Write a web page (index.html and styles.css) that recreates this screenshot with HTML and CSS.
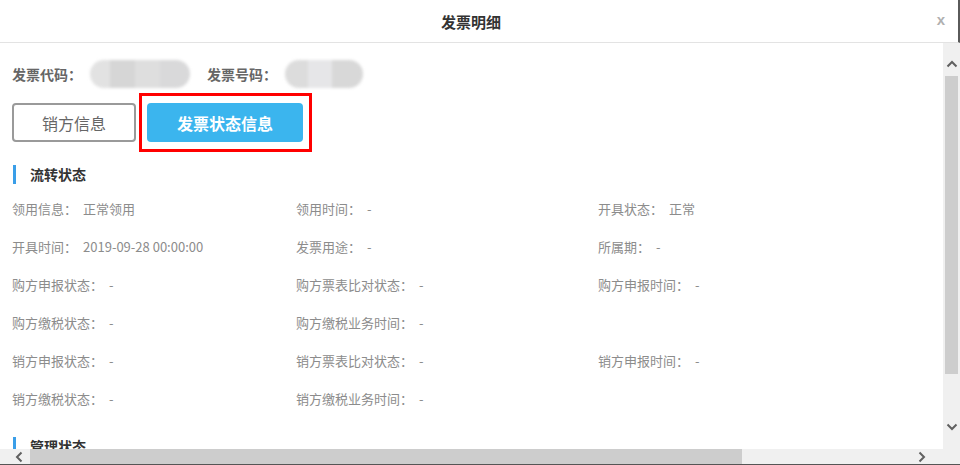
FILE: index.html
```html
<!DOCTYPE html>
<html lang="zh-CN">
<head>
    <meta charset="UTF-8">
    <meta name="viewport" content="width=device-width, initial-scale=1.0">
    <title>发票明细</title>
    <link rel="stylesheet" href="styles.css">
</head>
<body>
<div class="dialog">
    <div class="dialog-head">
        <span class="dialog-title">发票明细</span>
        <span class="close">x</span>
    </div>

    <div class="dialog-main">
        <div class="content">
            <div class="code-row">
                <span class="code-label">发票代码：</span>
                <span class="mask mask-a"></span>
                <span class="code-label">发票号码：</span>
                <span class="mask mask-b"></span>
            </div>

            <div class="tabs">
                <button class="tab">销方信息</button>
                <button class="tab tab-on">发票状态信息</button>
            </div>

            <div class="section-title">流转状态</div>
            <div class="fields">
                <div class="field"><span class="lbl">领用信息：</span>正常领用</div>
                <div class="field"><span class="lbl">领用时间：</span>-</div>
                <div class="field"><span class="lbl">开具状态：</span>正常</div>

                <div class="field"><span class="lbl">开具时间：</span>2019-09-28 00:00:00</div>
                <div class="field"><span class="lbl">发票用途：</span>-</div>
                <div class="field"><span class="lbl">所属期：</span>-</div>

                <div class="field"><span class="lbl">购方申报状态：</span>-</div>
                <div class="field"><span class="lbl">购方票表比对状态：</span>-</div>
                <div class="field"><span class="lbl">购方申报时间：</span>-</div>

                <div class="field"><span class="lbl">购方缴税状态：</span>-</div>
                <div class="field"><span class="lbl">购方缴税业务时间：</span>-</div>
                <div class="field"></div>

                <div class="field"><span class="lbl">销方申报状态：</span>-</div>
                <div class="field"><span class="lbl">销方票表比对状态：</span>-</div>
                <div class="field"><span class="lbl">销方申报时间：</span>-</div>

                <div class="field"><span class="lbl">销方缴税状态：</span>-</div>
                <div class="field"><span class="lbl">销方缴税业务时间：</span>-</div>
                <div class="field"></div>
            </div>

            <div class="section-title section-next">管理状态</div>
        </div>

        <div class="vscroll">
            <span class="arrow">
                <svg width="12" height="8" viewBox="0 0 12 8"><path d="M1.5 6.5 L6 2 L10.5 6.5" fill="none" stroke="#606060" stroke-width="2"/></svg>
            </span>
            <span class="vthumb"></span>
            <span class="vspace"></span>
            <span class="arrow">
                <svg width="12" height="8" viewBox="0 0 12 8"><path d="M1.5 1.5 L6 6 L10.5 1.5" fill="none" stroke="#606060" stroke-width="2"/></svg>
            </span>
        </div>
    </div>

    <div class="hscroll">
        <span class="arrow arrow-left">
            <svg width="8" height="12" viewBox="0 0 8 12"><path d="M6.5 1.5 L2 6 L6.5 10.5" fill="none" stroke="#606060" stroke-width="2"/></svg>
        </span>
        <span class="hthumb"></span>
        <span class="hspace"></span>
        <span class="arrow arrow-right">
            <svg width="8" height="12" viewBox="0 0 8 12"><path d="M1.5 1.5 L6 6 L1.5 10.5" fill="none" stroke="#606060" stroke-width="2"/></svg>
        </span>
        <span class="corner"></span>
    </div>
</div>
</body>
</html>
```

FILE: styles.css
```css
* {
    box-sizing: border-box;
}
body {
    margin: 0;
    background: #fff;
    font-family: "Noto Sans CJK SC", "Noto Sans", sans-serif;
}
.dialog {
    width: 960px;
    height: 465px;
    display: flex;
    flex-direction: column;
    overflow: hidden;
}
.dialog-head {
    height: 43px;
    flex: none;
    display: flex;
    align-items: center;
    justify-content: center;
    position: relative;
    border-bottom: 1px solid #e3e3e3;
    border-right: 2px solid #5a5a5a;
}
.dialog-title {
    font-size: 15px;
    font-weight: bold;
    color: #333;
    margin-right: 16px;
}
.close {
    position: absolute;
    right: 13px;
    top: 11px;
    font-family: "Liberation Sans", sans-serif;
    font-size: 15px;
    font-weight: bold;
    color: #b0b0b0;
}
.dialog-main {
    flex: 1;
    display: flex;
    min-height: 0;
}
.content {
    flex: 1;
    overflow: hidden;
    padding-left: 12px;
}
.code-row {
    display: flex;
    align-items: center;
    height: 28px;
    margin-top: 17px;
}
.code-label {
    font-size: 14px;
    font-weight: bold;
    color: #666;
}
.mask {
    height: 28px;
    border-radius: 14px;
    filter: blur(1.5px);
    background:
        linear-gradient(90deg, #e2e2e2 0 20%, #d6d6d6 20% 45%, #dedede 45% 70%, #d9d9da 70% 100%);
}
.mask-a {
    width: 100px;
    margin: 0 17px 0 8px;
}
.mask-b {
    width: 78px;
    margin-left: 8px;
    background:
        linear-gradient(90deg, #dcdcdc 0 30%, #e6e6e8 30% 60%, #d8d8d8 60% 100%);
}
.tabs {
    display: flex;
    gap: 11px;
    margin-top: 15px;
}
.tab {
    height: 39px;
    width: 124px;
    font-family: inherit;
    font-size: 16px;
    color: #666;
    background: #fff;
    border: 2px solid #9a9a9a;
    border-radius: 4px;
    padding: 0;
}
.tab-on {
    width: 156px;
    color: #fff;
    font-weight: bold;
    background: #3bb5ee;
    border: none;
    position: relative;
}
.tab-on::after {
    content: "";
    position: absolute;
    left: -8px;
    right: -9px;
    top: -10px;
    bottom: -10px;
    border: 3px solid #f00;
}
.section-title {
    margin-top: 23px;
    height: 19px;
    line-height: 19px;
    border-left: 3px solid #3a9ee8;
    margin-left: 1px;
    padding-left: 14px;
    font-size: 14px;
    font-weight: bold;
    color: #333;
}
.section-next {
    margin-top: 19px;
}
.fields {
    display: grid;
    grid-template-columns: 284px 302px 1fr;
    grid-auto-rows: 38px;
    margin-top: 6px;
}
.field {
    font-size: 13px;
    line-height: 38px;
    color: #8c8c8c;
    white-space: nowrap;
}
.lbl {
    margin-right: 6px;
}
.vscroll {
    width: 17px;
    flex: none;
    background: #f0f0f0;
    display: flex;
    flex-direction: column;
    align-items: center;
    padding: 13px 0 14px;
}
.arrow {
    display: flex;
    align-items: center;
    justify-content: center;
    width: 16px;
    height: 16px;
    flex: none;
}
.vthumb {
    width: 13px;
    height: 298px;
    margin-top: 4px;
    background: #cdcdcd;
}
.vspace {
    flex: 1;
}
.hscroll {
    height: 16px;
    flex: none;
    display: flex;
    align-items: center;
    background: #f0f0f0;
    border-bottom: 1px solid #555;
}
.arrow-left {
    margin-left: 11px;
}
.hthumb {
    width: 712px;
    height: 15px;
    margin-left: 3px;
    background: #cdcdcd;
}
.hspace {
    flex: 1;
}
.arrow-right {
    margin-right: 13px;
}
.corner {
    width: 17px;
    height: 15px;
    background: #f0f0f0;
}
```
